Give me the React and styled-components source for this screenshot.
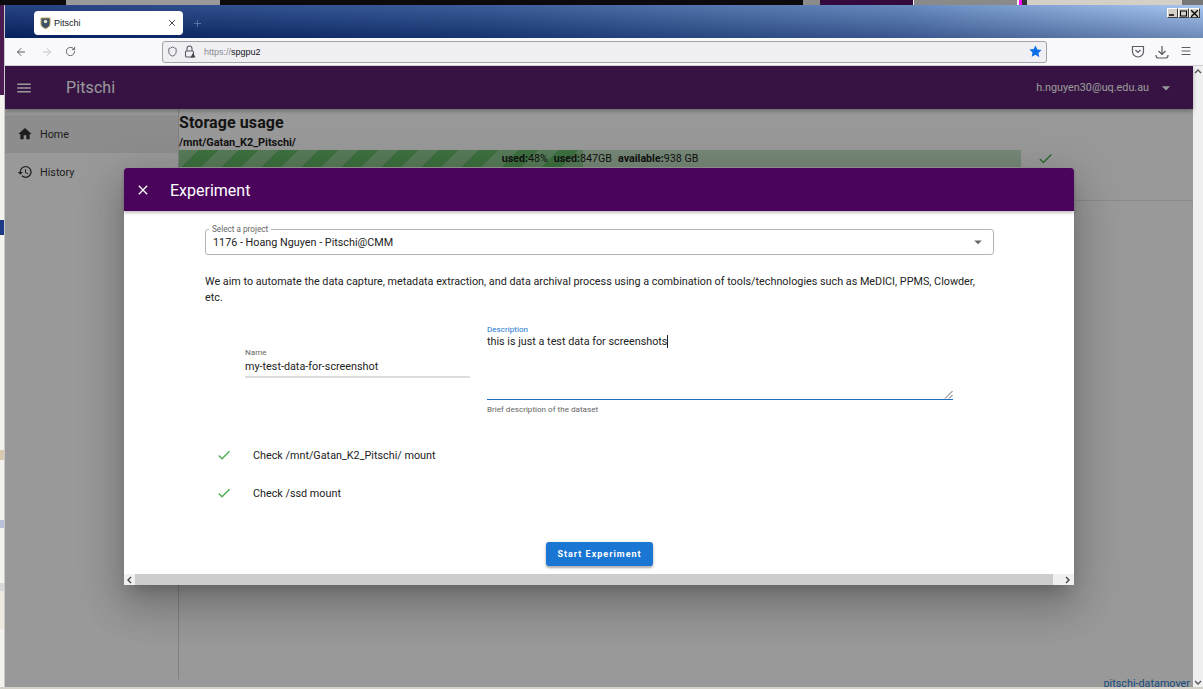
import React from "react";
import styled, { createGlobalStyle } from "styled-components";
import { MdHome, MdHistory, MdClose, MdCheck, MdMenu, MdArrowDropDown } from "react-icons/md";
import { ArrowLeft, ArrowRight, RotateCw, Shield, Menu as MenuLines, Plus, X } from "lucide-react";

const Global = createGlobalStyle`
  html, body { margin: 0; padding: 0; height: 100%; overflow: hidden; background: #d4d0c8; }
  * { box-sizing: border-box; }
  body { font-family: Roboto, "Liberation Sans", sans-serif; }
`;

const Screen = styled.div`
  width: 1203px; height: 689px; display: flex; flex-direction: column; overflow: hidden; position: relative;
`;
const DesktopStrip = styled.div`
  height: 5px; display: flex; flex: none; background: #0c0a0c;
`;
const BottomStrip = styled.div`
  height: 2px; flex: none; background: #d4d0c8;
`;
const Seg = styled.div`
  flex: none; width: ${p => p.$w}px; background: ${p => p.$c};
`;
const Middle = styled.div`
  flex: 1; min-height: 0; display: flex;
`;
const DesktopSide = styled.div`
  width: 5px; flex: none; display: flex; flex-direction: column; border-right: 1px solid #c9c9c9; background: #f4f2ee;
`;
const SideSeg = styled.div`
  height: ${p => p.$h}px; flex: none; background: ${p => p.$c};
`;
const Browser = styled.div`
  flex: 1; min-width: 0; display: flex; flex-direction: column; position: relative;
`;
const TitleBar = styled.div`
  height: 33px; flex: none; display: flex; align-items: flex-end; position: relative; padding-left: 29px;
  background: linear-gradient(to bottom, rgba(255,255,255,.12), rgba(0,10,50,.3)), linear-gradient(to right, #0a2a70 0%, #20468a 40%, #5278b4 75%, #9cc0f0 100%);
`;
const Tab = styled.div`
  width: 149px; height: 24px; margin-bottom: 3px; background: #fff; border-radius: 4px; display: flex; align-items: center; padding: 0 6px; gap: 3px; color: #15141a;
  font-size: 9px; font-family: "Liberation Sans", sans-serif;
`;
const TabTitle = styled.span`flex: 1;`;
const NewTab = styled.div`
  color: #5b77a8; margin: 0 0 9px 9px; display: flex;
`;
const WinControls = styled.div`
  position: absolute; right: 3px; top: 3px; display: flex;
`;
const WinBtn = styled.div`
  width: 11px; height: 10px; background: #d4d0c8; border: 1px solid; border-color: #fff #404040 #404040 #fff; display: flex; align-items: center; justify-content: center;
`;
const NavBar = styled.div`
  height: 28px; flex: none; background: #f9f9fb; display: flex; align-items: center; border-bottom: 1px solid #d0d0d4; color: #5b5b66;
`;
const NavBtn = styled.div`
  width: ${p => p.$w}px; flex: none; display: flex; justify-content: center; color: ${p => p.$c || "#5b5b66"};
`;
const UrlBar = styled.div`
  width: 885px; height: 22px; flex: none; margin-left: 2px; background: #f0f0f4; border: 1px solid #a2a2a6; border-radius: 3px; display: flex; align-items: center; padding: 0 4px 0 3px; font: 9px "Liberation Sans", sans-serif; color: #15141a;
`;
const Proto = styled.span`color: #8a8a92;`;
const UrlText = styled.div`flex: 1; margin-left: 2px;`;
const NavRight = styled.div`
  display: flex; margin-left: 79px; gap: 0;
`;
const App = styled.div`
  flex: 1; min-height: 0; display: flex; position: relative; overflow: hidden;
`;
const AppMain = styled.div`
  flex: 1; min-width: 0; display: flex; flex-direction: column; background: #fff; position: relative;
`;
const AppBar = styled.header`
  height: 43px; flex: none; background: #5a2070; color: #fff; display: flex; align-items: center; padding: 0 17px 0 10px; box-shadow: 0 2px 4px rgba(0,0,0,.3); position: relative; z-index: 1;
`;
const Brand = styled.div`
  font-size: 16px; margin-left: 33px; flex: 1; letter-spacing: .1px; color: #fff;
`;
const User = styled.div`font-size: 10.8px; display: flex; align-items: center; gap: 7px;`;
const Body = styled.div`
  flex: 1; min-height: 0; display: flex;
`;
const Sidebar = styled.nav`
  width: 174px; flex: none; padding-top: 6px; border-right: 1px solid #d8d8d8; margin-bottom: 8px;
`;
const NavItem = styled.div`
  height: 38px; display: flex; align-items: center; padding-left: 12px; gap: 7px; font-size: 10.8px; color: #333;
  background: ${p => p.$active ? "#ececec" : "transparent"};
`;
const Content = styled.main`
  flex: 1; min-width: 0; padding-top: 5px; display: flex; flex-direction: column;
`;
const Heading = styled.h1`
  margin: 0; font-size: 16px; line-height: 17px; font-weight: 700; color: #222; letter-spacing: .1px;
`;
const PathLabel = styled.div`
  font-size: 10.9px; font-weight: 700; color: #222; line-height: 12px; margin-top: 6px; margin-bottom: 1px;
`;
const UsageRow = styled.div`
  display: flex; align-items: center; gap: 16px; border-bottom: 1px solid #e6e6e6; padding-bottom: 33px;
`;
const UsageBar = styled.div`
  width: 842px; height: 17px; background: #c5e2c6; position: relative; flex: none;
`;
const UsageFill = styled.div`
  height: 100%; background-color: #66bb6a;
  background-image: linear-gradient(135deg, rgba(255,255,255,.28) 25%, transparent 25%, transparent 50%, rgba(255,255,255,.28) 50%, rgba(255,255,255,.28) 75%, transparent 75%);
  background-size: 40px 40px;
`;
const UsageText = styled.div`
  position: absolute; inset: 0; display: flex; justify-content: center; align-items: center; gap: 6px; font-size: 10.7px; color: #222;
  b { font-weight: 700; }
`;
const Footer = styled.div`
  position: absolute; right: 3px; bottom: -3px; font-size: 10.8px; line-height: 13px; color: #2a7ed0; z-index: 0;
`;
const ScrollV = styled.div`
  width: 10px; flex: none; background: #f0f0f0; display: flex; flex-direction: column; justify-content: space-between; align-items: center; color: #555; padding: 2px 0 1px;
`;
const Overlay = styled.div`
  position: absolute; left: 0; right: 10px; top: 0; bottom: 0; background: rgba(0,0,0,.4); z-index: 5; padding: 102px 0 0 119px;
`;
const Dialog = styled.section`
  width: 950px; height: 417px; display: flex; flex-direction: column; background: #fff; border-radius: 3px;
  box-shadow: 0 11px 15px -7px rgba(0,0,0,.2), 0 24px 38px 3px rgba(0,0,0,.14), 0 9px 46px 8px rgba(0,0,0,.12);
`;
const DialogHeader = styled.header`
  height: 43px; flex: none; background: #4a045c; color: #fff; border-radius: 3px 3px 0 0; display: flex; align-items: center; padding: 1px 0 0 11px; gap: 19px; font-size: 16px; box-shadow: 0 2px 3px rgba(0,0,0,.25); position: relative;
`;
const DialogBody = styled.div`
  flex: 1; min-height: 0; padding: 18px 80px 0 81px; color: #222; display: flex; flex-direction: column;
`;
const SelectBox = styled.div`
  height: 26px; flex: none; border: 1px solid #b4b4b4; border-radius: 3px; position: relative; display: flex; align-items: center; padding: 0 6px 0 7px; font-size: 10.8px; justify-content: space-between; color: #222;
`;
const SelectLabel = styled.span`
  position: absolute; left: 3px; top: -6px; background: #fff; padding: 0 3px; font-size: 8.2px; line-height: 10px; color: #666;
`;
const Para = styled.p`
  margin: 19px 0 0; font-size: 10.8px; line-height: 16px; color: #222;
`;
const Fields = styled.div`
  display: grid; grid-template-columns: 225px 466px; column-gap: 17px; margin: 18px 0 0 40px; align-items: start;
`;
const NameField = styled.div`
  margin-top: 23px; border-bottom: 2px solid #dcdcdc; height: 31px;
`;
const FieldLabel = styled.div`
  font-size: 8.1px; line-height: 10px; color: ${p => p.$c || "#666"};
`;
const FieldValue = styled.div`
  font-size: 10.8px; line-height: 14px; margin-top: ${p => p.$top}px; color: #222;
`;
const Caret = styled.span`border-right: 1px solid #222;`;
const DescArea = styled.div`
  height: 65px; border-bottom: 1px solid #1f6fc0; position: relative;
`;
const Grip = styled.svg`position: absolute; right: 0; bottom: 0;`;
const Helper = styled.div`font-size: 8.1px; line-height: 10px; color: #666; margin-top: 4px;`;
const Checks = styled.div`
  margin: 22px 0 0 11px; display: flex; flex-direction: column;
`;
const CheckRow = styled.div`
  height: 38px; display: flex; align-items: center; gap: 21px; font-size: 10.8px; color: #222;
`;
const Action = styled.div`display: flex; justify-content: center; margin-top: 30px;`;
const StartBtn = styled.button`
  width: 107px; height: 24px; border: 0; border-radius: 3px; background: #1976d2; color: #fff; font: 700 9px Roboto, sans-serif; letter-spacing: 1px; box-shadow: 0 2px 2px rgba(0,0,0,.25), 0 1px 4px rgba(0,0,0,.15);
`;
const ScrollH = styled.div`
  height: 11px; flex: none; display: flex; background: #cdcdcd;
`;
const ScrollEnd = styled.div`
  width: ${p => p.$w}px; flex: none; background: #f0f0f0; color: #444; display: flex; align-items: center; justify-content: flex-end; padding-right: 3px;
`;
const Spacer = styled.div`flex: 1;`;

const Crest = () => (
  <svg width="11" height="12" viewBox="0 0 11 12">
    <path d="M1 1h9v6c0 2.500-2.500 4-4.500 4.500C3.500 11 1 9.500 1 7z" fill="#3d4f66" stroke="#b7a45a" />
    <circle cx="5.500" cy="4.500" r="1.800" fill="#dfe3c8" />
  </svg>
);
const Lock = () => (
  <svg width="12" height="13" viewBox="0 0 12 13" fill="none" stroke="#5b5b66" strokeWidth="1.100">
    <path d="M3 6V3.500a2.500 2.500 0 0 1 5 0V6" />
    <rect x="1.500" y="6" width="8" height="6" rx="1" />
    <path d="M9 8l2.500 4.500h-5z" fill="#444" stroke="none" />
  </svg>
);
const Star = () => (
  <svg width="13" height="13" viewBox="0 0 24 24"><path fill="#0a6fe8" d="M12 1l3.400 7.300 7.900 1-5.800 5.500 1.500 7.900L12 18l-7 3.700 1.500-7.900L.7 8.300l7.900-1z" /></svg>
);
const Pocket = () => (
  <svg width="14" height="13" viewBox="0 0 14 13" fill="none" stroke="#5b5b66" strokeWidth="1.200">
    <path d="M1.500 1.500h11v5a5.500 5.500 0 0 1-11 0z" />
    <path d="M4.500 5l2.500 2.500L9.500 5" />
  </svg>
);
const Download = () => (
  <svg width="14" height="14" viewBox="0 0 14 14" fill="none" stroke="#5b5b66" strokeWidth="1.200">
    <path d="M7 1v8M3.500 6L7 9.500 10.500 6M1 10c0 2 1 3 2 3h8c1 0 2-1 2-3" />
  </svg>
);

const ChevUp = () => (<svg width="8" height="6" viewBox="0 0 8 6" fill="none" stroke="#555" strokeWidth="1.400"><path d="M1 5l3-3 3 3" /></svg>);
const ChevDown = () => (<svg width="8" height="6" viewBox="0 0 8 6" fill="none" stroke="#555" strokeWidth="1.400"><path d="M1 1l3 3 3-3" /></svg>);
const ChevLeft = () => (<svg width="6" height="8" viewBox="0 0 6 8" fill="none" stroke="#444" strokeWidth="1.400"><path d="M5 1L2 4l3 3" /></svg>);
const ChevRight = () => (<svg width="6" height="8" viewBox="0 0 6 8" fill="none" stroke="#444" strokeWidth="1.400"><path d="M1 1l3 3-3 3" /></svg>);

const topSegs = [[66,"#0c0a0c"],[154,"#9a9a9a"],[583,"#0c0a0c"],[17,"#8c8c8c"],[93,"#35093d"],[1,"#f4f2ee"],[103,"#8a8a8a"],[2,"#f4f2ee"],[3,"#ff00ff"],[5,"#333"],[155,"#d4d0c8"],[21,"#777"]];
const sideSegs = [[90,"#4a1a50"],[125,"#f4f2ee"],[15,"#1c3a86"],[215,"#f4f2ee"],[10,"#d8c8b0"],[60,"#f4f2ee"],[8,"#b9c0d8"],[55,"#f4f2ee"],[8,"#d8d8d8"],[38,"#efeae0"]];

export default function Page() {
  return (
    <Screen>
      <Global />
      <DesktopStrip>
        {topSegs.map(([w, c], i) => <Seg key={i} $w={w} $c={c} />)}
      </DesktopStrip>
      <Middle>
        <DesktopSide>
          {sideSegs.map(([h, c], i) => <SideSeg key={i} $h={h} $c={c} />)}
        </DesktopSide>
        <Browser>
          <TitleBar>
            <Tab>
              <Crest />
              <TabTitle>Pitschi</TabTitle>
              <X size={10} color="#222" />
            </Tab>
            <NewTab><Plus size={11} /></NewTab>
            <WinControls>
              <WinBtn><svg width="7" height="6"><path d="M0 5h5" stroke="#000" strokeWidth="1.500" /></svg></WinBtn>
              <WinBtn><svg width="7" height="7"><rect x=".5" y="1" width="6" height="5" fill="none" stroke="#000" /></svg></WinBtn>
              <WinBtn><svg width="7" height="7"><path d="M0 0l7 7M7 0L0 7" stroke="#000" strokeWidth="1.300" /></svg></WinBtn>
            </WinControls>
          </TitleBar>
          <NavBar>
            <NavBtn $w={32}><ArrowLeft size={12} /></NavBtn>
            <NavBtn $w={20} $c="#c4c4c8"><ArrowRight size={12} /></NavBtn>
            <NavBtn $w={26}><RotateCw size={11} /></NavBtn>
            <NavBtn $w={77} />
            <UrlBar>
              <NavBtn $w={12}><Shield size={11} /></NavBtn>
              <NavBtn $w={24}><Lock /></NavBtn>
              <UrlText><Proto>https://</Proto>spgpu2</UrlText>
              <Star />
            </UrlBar>
            <NavRight>
              <NavBtn $w={24}><Pocket /></NavBtn>
              <NavBtn $w={24}><Download /></NavBtn>
              <NavBtn $w={24}><MenuLines size={12} /></NavBtn>
            </NavRight>
          </NavBar>
          <App>
            <AppMain>
              <AppBar>
                <MdMenu size={18} />
                <Brand>Pitschi</Brand>
                <User>h.nguyen30@uq.edu.au <MdArrowDropDown size={20} /></User>
              </AppBar>
              <Body>
                <Sidebar>
                  <NavItem $active><MdHome size={16} />Home</NavItem>
                  <NavItem><MdHistory size={16} />History</NavItem>
                </Sidebar>
                <Content>
                  <Heading>Storage usage</Heading>
                  <PathLabel>/mnt/Gatan_K2_Pitschi/</PathLabel>
                  <UsageRow>
                    <UsageBar>
                      <UsageFill style={{ width: "48%" }} />
                      <UsageText>
                        <span><b>used:</b>48%</span>
                        <span><b>used:</b>847GB</span>
                        <span><b>available:</b>938 GB</span>
                      </UsageText>
                    </UsageBar>
                    <MdCheck size={17} color="#4caf50" />
                  </UsageRow>
                  <Footer>pitschi-datamover</Footer>
                </Content>
              </Body>
            </AppMain>
            <ScrollV><ChevUp /><ChevDown /></ScrollV>
            <Overlay>
              <Dialog>
                <DialogHeader><MdClose size={16} />Experiment</DialogHeader>
                <DialogBody>
                  <SelectBox>
                    <SelectLabel>Select a project</SelectLabel>
                    1176 - Hoang Nguyen - Pitschi@CMM
                    <MdArrowDropDown size={18} color="#666" />
                  </SelectBox>
                  <Para>We aim to automate the data capture, metadata extraction, and data archival process using a combination of tools/technologies such as MeDICI, PPMS, Clowder, etc.</Para>
                  <Fields>
                    <NameField>
                      <FieldLabel>Name</FieldLabel>
                      <FieldValue $top={3}>my-test-data-for-screenshot</FieldValue>
                    </NameField>
                    <div>
                      <FieldLabel $c="#1976d2">Description</FieldLabel>
                      <DescArea>
                        <FieldValue $top={1}><Caret>this is just a test data for screenshots</Caret></FieldValue>
                        <Grip width="9" height="9" viewBox="0 0 9 9" stroke="#666"><path d="M8.500 1L1 8.500M8.500 5L5 8.500" /></Grip>
                      </DescArea>
                      <Helper>Brief description of the dataset</Helper>
                    </div>
                  </Fields>
                  <Checks>
                    <CheckRow><MdCheck size={16} color="#4caf50" />Check /mnt/Gatan_K2_Pitschi/ mount</CheckRow>
                    <CheckRow><MdCheck size={16} color="#4caf50" />Check /ssd mount</CheckRow>
                  </Checks>
                  <Action><StartBtn>Start Experiment</StartBtn></Action>
                </DialogBody>
                <ScrollH>
                  <ScrollEnd $w={11}><ChevLeft /></ScrollEnd>
                  <Spacer />
                  <ScrollEnd $w={21}><ChevRight /></ScrollEnd>
                </ScrollH>
              </Dialog>
            </Overlay>
          </App>
        </Browser>
      </Middle>
      <BottomStrip />
    </Screen>
  );
}
